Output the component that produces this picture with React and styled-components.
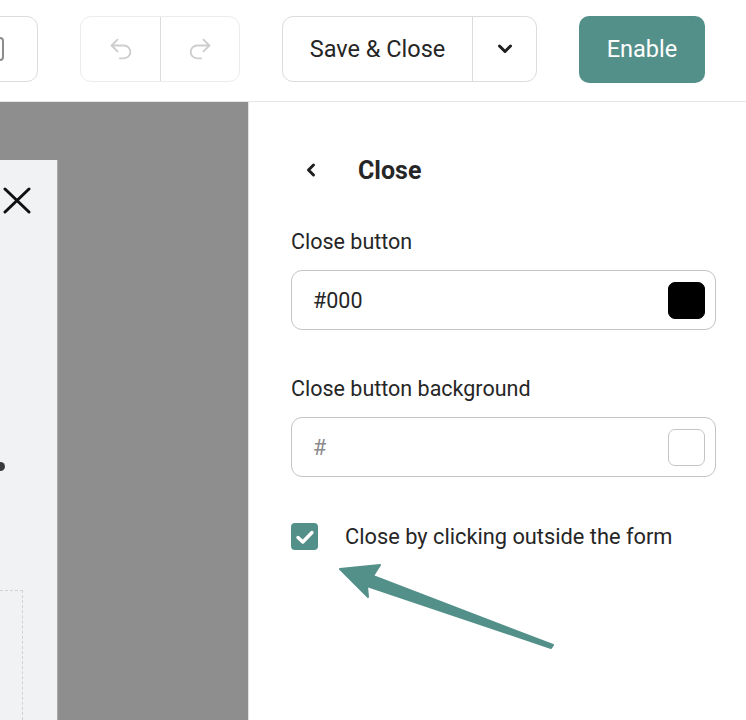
import React from "react";
import styled, { createGlobalStyle } from "styled-components";

const GlobalStyle = createGlobalStyle`
	html, body {
		margin: 0;
		padding: 0;
		background: #ffffff;
	}
	body {
		font-family: Roboto, "Noto Sans", "Liberation Sans", sans-serif;
		color: #262626;
	}
`;

const Page = styled.div`
	width: 746px;
	height: 720px;
	display: flex;
	flex-direction: column;
	overflow: hidden;
	position: relative;
`;

const TopBar = styled.div`
	height: 102px;
	flex-shrink: 0;
	display: flex;
	align-items: center;
	gap: 42px;
	padding-bottom: 3px;
	border-bottom: 1.5px solid #e6e6e6;
	box-sizing: border-box;
`;

const ButtonGroup = styled.div`
	display: flex;
	height: 66px;
	box-sizing: border-box;
	border: 1.5px solid ${(p) => (p.$faded ? "#ececec" : "#dcdcdc")};
	border-radius: 11px;
	background: #fff;
	overflow: hidden;
	margin-left: ${(p) => p.$offset || 0}px;
`;

const GroupButton = styled.button`
	width: ${(p) => p.$width}px;
	height: 100%;
	border: none;
	background: transparent;
	display: flex;
	align-items: center;
	justify-content: center;
	font-family: inherit;
	font-size: 23.5px;
	color: #262626;
	padding: 0;
	& + & {
		border-left: 1.5px solid ${(p) => (p.$faded ? "#ececec" : "#dcdcdc")};
	}
`;

const DeviceIcon = styled.span`
	width: 20px;
	height: 20px;
	border: 2px solid #8c8c8c;
	border-radius: 4px;
	margin-left: auto;
	margin-right: 33px;
`;

const EnableButton = styled.button`
	width: 126px;
	height: 67px;
	border: none;
	border-radius: 10px;
	background: #53908a;
	color: #fff;
	font-family: inherit;
	font-size: 23.5px;
`;

const Body = styled.div`
	flex: 1;
	display: flex;
	min-height: 0;
`;

const Canvas = styled.div`
	width: 248px;
	flex-shrink: 0;
	background: #8e8e8e;
	border-right: 1.5px solid #e2e2e2;
	padding-top: 58px;
	display: flex;
	align-items: stretch;
	overflow: hidden;
`;

const FormCard = styled.div`
	width: 58px;
	background: #f1f2f4;
	border-right: 1px solid #a9a9ab;
	display: flex;
	flex-direction: column;
	padding-top: 27px;
	box-sizing: border-box;
`;

const CloseMark = styled.svg`
	margin-left: 3px;
	flex-shrink: 0;
`;

const Dot = styled.span`
	width: 5px;
	height: 9px;
	border-radius: 0 5px 5px 0;
	background: #3a3a3a;
	margin-top: 248px;
`;

const DashedBox = styled.div`
	width: 22px;
	flex: 1;
	margin-top: 119px;
	border-top: 1.5px dashed #d2d2d4;
	border-right: 1.5px dashed #d2d2d4;
`;

const Panel = styled.div`
	flex: 1;
	padding: 48px 30px 0 42px;
	display: flex;
	flex-direction: column;
	position: relative;
`;

const PanelHeader = styled.div`
	height: 40px;
	display: flex;
	align-items: center;
	gap: 41px;
	padding-left: 14px;
`;

const Title = styled.h2`
	margin: 0;
	font-size: 25px;
	font-weight: 700;
	color: #262626;
`;

const Field = styled.div`
	display: flex;
	flex-direction: column;
	margin-top: ${(p) => p.$top}px;
`;

const Label = styled.label`
	font-size: 21.5px;
	line-height: 26px;
	color: #262626;
	margin-bottom: 15px;
`;

const ColorInput = styled.div`
	height: 60px;
	box-sizing: border-box;
	border: 1.5px solid #c4c4c4;
	border-radius: 11px;
	display: flex;
	align-items: center;
	justify-content: space-between;
	padding: 0 10px 0 21px;
`;

const InputText = styled.span`
	font-size: 21.5px;
	color: ${(p) => (p.$placeholder ? "#8a8a8a" : "#262626")};
`;

const Swatch = styled.span`
	width: 37px;
	height: 37px;
	box-sizing: border-box;
	border-radius: 7px;
	background: ${(p) => p.$color};
	border: 1.5px solid ${(p) => (p.$color === "#000" ? "#000" : "#c4c4c4")};
`;

const CheckRow = styled.div`
	display: flex;
	align-items: center;
	gap: 27px;
	margin-top: 46px;
`;

const CheckBox = styled.span`
	width: 27px;
	height: 27px;
	flex-shrink: 0;
	border-radius: 4px;
	background: #53908a;
	display: flex;
	align-items: center;
	justify-content: center;
`;

const CheckLabel = styled.span`
	font-size: 21.8px;
	color: #262626;
`;

const Arrow = styled.svg`
	position: absolute;
	left: 0;
	top: 0;
	pointer-events: none;
`;

const UndoIcon = ({ flip }) => (
	<svg
		width="28"
		height="28"
		viewBox="0 0 24 24"
		fill="none"
		stroke="#cdcdcd"
		strokeWidth="1.6"
		strokeLinecap="round"
		strokeLinejoin="round"
		style={flip ? { transform: "scaleX(-1)" } : undefined}
	>
		<path d="M9 14 4 9l5-5" />
		<path d="M4 9h10.5a5.5 5.5 0 0 1 5.5 5.5a5.5 5.5 0 0 1-5.5 5.5H11" />
	</svg>
);

const App = () => {
	return (
		<Page>
			<GlobalStyle />
			<TopBar>
				<ButtonGroup $offset={-42}>
					<GroupButton $width={78}>
						<DeviceIcon />
					</GroupButton>
				</ButtonGroup>
				<ButtonGroup $faded>
					<GroupButton $width={79} $faded>
						<UndoIcon />
					</GroupButton>
					<GroupButton $width={79} $faded>
						<UndoIcon flip />
					</GroupButton>
				</ButtonGroup>
				<ButtonGroup>
					<GroupButton $width={189}>Save &amp; Close</GroupButton>
					<GroupButton $width={64}>
						<svg width="16" height="12" viewBox="0 0 16 12">
							<polyline
								points="2.5,3 8,8.5 13.5,3"
								fill="none"
								stroke="#1f1f1f"
								strokeWidth="3"
								strokeLinecap="round"
								strokeLinejoin="round"
							/>
						</svg>
					</GroupButton>
				</ButtonGroup>
				<EnableButton>Enable</EnableButton>
			</TopBar>
			<Body>
				<Canvas>
					<FormCard>
						<CloseMark width="28" height="27" viewBox="0 0 28 27">
							<path
								d="M2 2 L26 25 M26 2 L2 25"
								stroke="#111"
								strokeWidth="3"
								strokeLinecap="round"
							/>
						</CloseMark>
						<Dot />
						<DashedBox />
					</FormCard>
				</Canvas>
				<Panel>
					<PanelHeader>
						<svg width="12" height="16" viewBox="0 0 12 16">
							<polyline
								points="8.5,3 3.5,8 8.5,13"
								fill="none"
								stroke="#1f1f1f"
								strokeWidth="3"
								strokeLinecap="round"
								strokeLinejoin="round"
							/>
						</svg>
						<Title>Close</Title>
					</PanelHeader>
					<Field $top={39}>
						<Label>Close button</Label>
						<ColorInput>
							<InputText>#000</InputText>
							<Swatch $color="#000" />
						</ColorInput>
					</Field>
					<Field $top={46}>
						<Label>Close button background</Label>
						<ColorInput>
							<InputText $placeholder>#</InputText>
							<Swatch $color="#fff" />
						</ColorInput>
					</Field>
					<CheckRow>
						<CheckBox>
							<svg width="20" height="16" viewBox="0 0 20 16">
								<polyline
									points="3,8.5 7.8,13 17,3.5"
									fill="none"
									stroke="#fff"
									strokeWidth="3.4"
									strokeLinecap="round"
									strokeLinejoin="round"
								/>
							</svg>
						</CheckBox>
						<CheckLabel>Close by clicking outside the form</CheckLabel>
					</CheckRow>
					<Arrow width="497" height="618" viewBox="0 0 497 618">
						<polygon
							points="91,467 131,463 124,474 304,543 302,546 118,484 119,495"
							fill="#53908a"
							stroke="#53908a"
							strokeWidth="2"
							strokeLinejoin="round"
						/>
					</Arrow>
				</Panel>
			</Body>
		</Page>
	);
};

export default App;
